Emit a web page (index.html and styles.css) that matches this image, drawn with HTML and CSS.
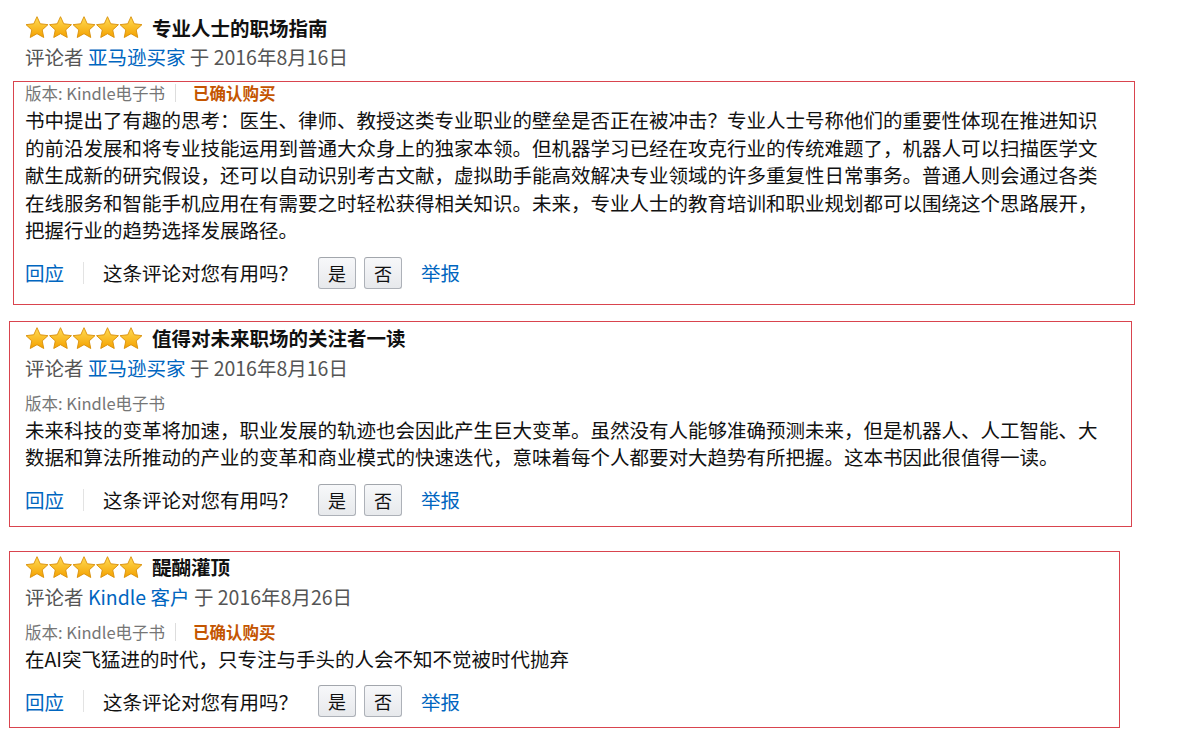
FILE: index.html
```html
<!DOCTYPE html>
<html lang="zh-CN">
<head>
  <meta charset="UTF-8" />
  <meta name="viewport" content="width=device-width, initial-scale=1.0"/>
  <title>Kindle 评论</title>
  <link rel="stylesheet" href="styles.css">
</head>
<body>

  <!-- review 1: the mark only wraps the body part -->
  <div class="review-top">
    <div class="review-head">
      <svg class="stars" width="118" height="22" viewBox="0 0 118 22">
        <defs>
          <linearGradient id="starFill" x1="0" y1="0" x2="0" y2="1">
            <stop offset="0" stop-color="#ffdc55"/>
            <stop offset="1" stop-color="#f4a100"/>
          </linearGradient>
          <path id="star" d="M12 .7L15.23 7.75 22.94 8.65 17.23 13.9 18.76 21.5 12 17.7 5.24 21.5 6.77 13.9 1.06 8.65 8.77 7.75Z" fill="url(#starFill)" stroke="#d88f08" stroke-width="0.9" stroke-linejoin="round"/>
        </defs>
        <use href="#star" x="0"/>
        <use href="#star" x="23.5"/>
        <use href="#star" x="47"/>
        <use href="#star" x="70.5"/>
        <use href="#star" x="94"/>
      </svg>
      <span class="review-title">专业人士的职场指南</span>
    </div>
    <div class="review-meta">评论者 <a class="link">亚马逊买家</a> 于 2016年8月16日</div>
  </div>
  <div class="mark mark-1">
    <div class="format">版本: Kindle电子书<span class="format-sep"></span><span class="verified">已确认购买</span></div>
    <div class="review-text">书中提出了有趣的思考：医生、律师、教授这类专业职业的壁垒是否正在被冲击？专业人士号称他们的重要性体现在推进知识的前沿发展和将专业技能运用到普通大众身上的独家本领。但机器学习已经在攻克行业的传统难题了，机器人可以扫描医学文献生成新的研究假设，还可以自动识别考古文献，虚拟助手能高效解决专业领域的许多重复性日常事务。普通人则会通过各类在线服务和智能手机应用在有需要之时轻松获得相关知识。未来，专业人士的教育培训和职业规划都可以围绕这个思路展开，把握行业的趋势选择发展路径。</div>
    <div class="actions">
      <a class="link">回应</a>
      <span class="action-sep"></span>
      <span>这条评论对您有用吗？</span>
      <div class="vote">
        <button class="vote-btn">是</button>
        <button class="vote-btn">否</button>
      </div>
      <a class="link report">举报</a>
    </div>
  </div>

  <!-- review 2 -->
  <div class="mark mark-2">
    <div class="review-head">
      <svg class="stars" width="118" height="22" viewBox="0 0 118 22">
        <use href="#star" x="0"/>
        <use href="#star" x="23.5"/>
        <use href="#star" x="47"/>
        <use href="#star" x="70.5"/>
        <use href="#star" x="94"/>
      </svg>
      <span class="review-title">值得对未来职场的关注者一读</span>
    </div>
    <div class="review-meta">评论者 <a class="link">亚马逊买家</a> 于 2016年8月16日</div>
    <div class="format">版本: Kindle电子书</div>
    <div class="review-text">未来科技的变革将加速，职业发展的轨迹也会因此产生巨大变革。虽然没有人能够准确预测未来，但是机器人、人工智能、大数据和算法所推动的产业的变革和商业模式的快速迭代，意味着每个人都要对大趋势有所把握。这本书因此很值得一读。</div>
    <div class="actions">
      <a class="link">回应</a>
      <span class="action-sep"></span>
      <span>这条评论对您有用吗？</span>
      <div class="vote">
        <button class="vote-btn">是</button>
        <button class="vote-btn">否</button>
      </div>
      <a class="link report">举报</a>
    </div>
  </div>

  <!-- review 3 -->
  <div class="mark mark-3">
    <div class="review-head">
      <svg class="stars" width="118" height="22" viewBox="0 0 118 22">
        <use href="#star" x="0"/>
        <use href="#star" x="23.5"/>
        <use href="#star" x="47"/>
        <use href="#star" x="70.5"/>
        <use href="#star" x="94"/>
      </svg>
      <span class="review-title">醍醐灌顶</span>
    </div>
    <div class="review-meta">评论者 <a class="link">Kindle 客户</a> 于 2016年8月26日</div>
    <div class="format">版本: Kindle电子书<span class="format-sep"></span><span class="verified">已确认购买</span></div>
    <div class="review-text">在AI突飞猛进的时代，只专注与手头的人会不知不觉被时代抛弃</div>
    <div class="actions">
      <a class="link">回应</a>
      <span class="action-sep"></span>
      <span>这条评论对您有用吗？</span>
      <div class="vote">
        <button class="vote-btn">是</button>
        <button class="vote-btn">否</button>
      </div>
      <a class="link report">举报</a>
    </div>
  </div>

</body>
</html>
```

FILE: styles.css
```css
* {
  margin: 0;
  padding: 0;
  box-sizing: border-box;
}

body {
  background: #fff;
  color: #111;
  font-family: "Noto Sans CJK SC", "Microsoft YaHei", "Noto Sans", sans-serif;
  font-size: 19.5px;
}

.link {
  color: #0066c0;
  text-decoration: none;
  cursor: pointer;
}

.review-top {
  padding: 12px 0 0 25px;
}

.review-head {
  display: flex;
  align-items: center;
  gap: 9px;
  height: 30px;
}

.stars {
  display: block;
  flex-shrink: 0;
}

.review-title {
  font-weight: bold;
  font-size: 19.5px;
  color: #111;
}

.review-meta {
  line-height: 30px;
  color: #555;
  margin-bottom: 9px;
}

/* red outline around a review */
.mark {
  border: 1px solid #d9444e;
}

.mark-1 {
  width: 1122px;
  margin-left: 13px;
  padding: 0 0 15px 11px;
}

.mark-2 {
  width: 1123px;
  margin: 16px 0 0 9px;
  padding: 1px 0 10px 15px;
}

.mark-3 {
  width: 1111px;
  margin: 24px 0 0 9px;
  padding: 0 0 10px 15px;
}

.format {
  display: flex;
  align-items: center;
  height: 22px;
  font-size: 16.5px;
  color: #767676;
}

.format-sep {
  display: inline-block;
  width: 1px;
  height: 18px;
  background: #ddd;
  margin: 0 17px 0 10px;
}

.verified {
  color: #c45500;
  font-weight: bold;
}

.review-text {
  max-width: 1082px;
  margin-top: 2px;
  line-height: 27.5px;
}

.actions {
  display: flex;
  align-items: center;
  height: 32px;
  margin-top: 13px;
}

.action-sep {
  display: inline-block;
  width: 1px;
  height: 22px;
  background: #e3e3e3;
  margin: 0 19px;
}

.vote {
  display: flex;
  gap: 8px;
  margin-left: 20px;
}

.vote-btn {
  width: 38px;
  height: 32px;
  border: 1px solid #adb1b8;
  border-top-color: #a2a6ac;
  border-radius: 3px;
  background: linear-gradient(#f7f8fa, #e7e9ec);
  color: #111;
  font-family: inherit;
  font-size: 18px;
  cursor: pointer;
}

.report {
  margin-left: 19px;
}
```
